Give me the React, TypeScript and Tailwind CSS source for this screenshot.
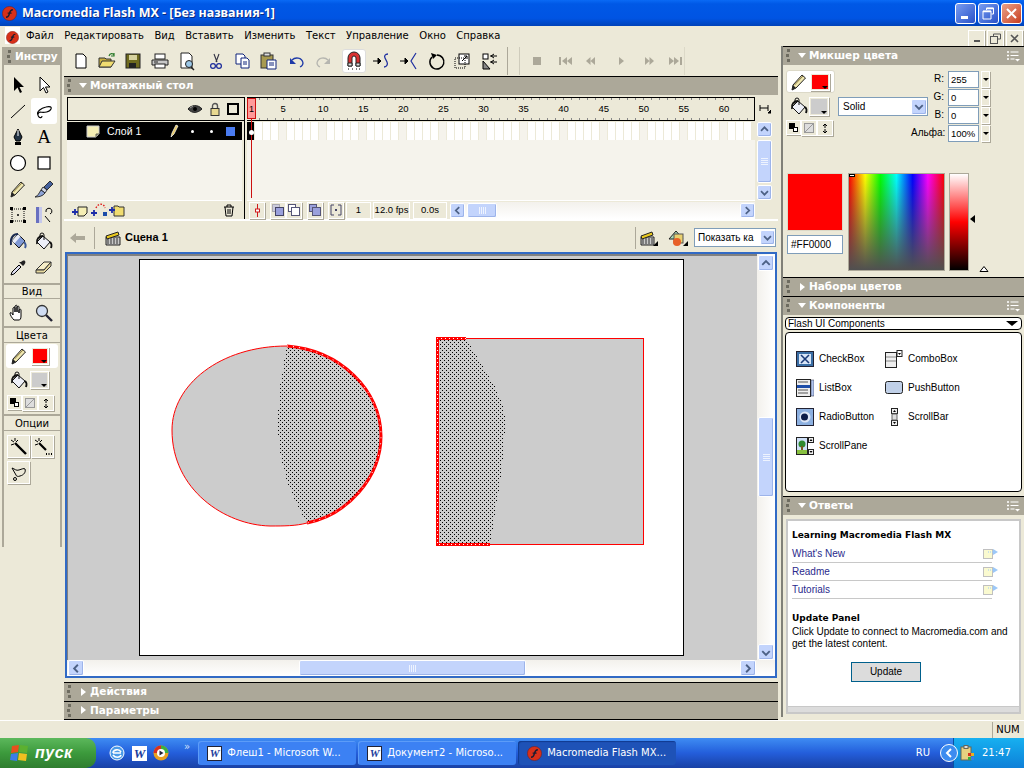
import React from "react";

// ===== SMALL HELPERS =====

function Ico({ w = 20, h = 20, children }: { w?: number; h?: number; children: React.ReactNode }) {
  return (
    <svg width={w} height={h} viewBox={`0 0 ${w} ${h}`} className="block shrink-0">
      {children}
    </svg>
  );
}

function FlashLogo({ size = 18 }: { size?: number }) {
  return (
    <svg width={size} height={size} viewBox="0 0 18 18" className="block shrink-0">
      <circle cx="9" cy="9" r="8.5" fill="#d7301a" stroke="#7a1a10" strokeWidth="0.6" />
      <path d="M13 4.5C9.5 4.5 9.5 7 8.8 9.5 8.2 12 7.5 13.5 4.8 13.5M6.8 8.5H11.5" fill="none" stroke="#1c1c30" strokeWidth="1.7" />
    </svg>
  );
}

function Grip() {
  return (
    <div className="flex flex-col gap-[2px] w-[4px] shrink-0">
      {[0, 1, 2].map((i) => (
        <div key={i} className="w-[3px] h-[3px] bg-[#6e6c60] odd:ml-[1px]" />
      ))}
    </div>
  );
}

function MenuGlyph() {
  return (
    <Ico w={14} h={12}>
      <path d="M1 2h2M1 5.5h2M1 9h2" stroke="#fff" strokeWidth="1.4" />
      <path d="M4.5 2h8M4.5 5.500h8M4.500 9h4" stroke="#fff" strokeWidth="1.2" />
      <path d="M9 9h5l-2.500 2.500z" fill="#fff" />
    </Ico>
  );
}

function PanelHeader({ title, open = false, menu = false, short = false }: { title: string; open?: boolean; menu?: boolean; short?: boolean }) {
  return (
    <div className={`${short ? "h-[18px]" : "h-[19px]"} shrink-0 bg-[#aca899] border-t border-black flex items-center pl-[3px] pr-[4px] pb-[1px] text-white font-bold text-[10.5px]`}>
      <Grip />
      {open ? (
        <div className="ml-[8px] w-0 h-0 border-l-[4px] border-r-[4px] border-t-[5px] border-l-transparent border-r-transparent border-t-white" />
      ) : (
        <div className="ml-[10px] w-0 h-0 border-t-[4px] border-b-[4px] border-l-[5px] border-t-transparent border-b-transparent border-l-white" />
      )}
      <span className={open ? "ml-[3px]" : "ml-[4px]"}>{title}</span>
      {menu && (
        <div className="ml-auto">
          <MenuGlyph />
        </div>
      )}
    </div>
  );
}

function ScrollBtn({ dir, big = false }: { dir: "up" | "down" | "left" | "right"; big?: boolean }) {
  const paths = {
    up: "M3.500 9L7.500 5 11.500 9",
    down: "M3.500 6L7.500 10 11.500 6",
    left: "M9.500 3.500L5.500 7.500 9.500 11.500",
    right: "M5.500 3.500L9.500 7.500 5.500 11.500",
  };
  return (
    <div className={`${big ? "w-[16px] h-[16px]" : "w-[15px] h-[15px]"} shrink-0 rounded-[2px] border border-white bg-[#c3d4fc] flex items-center justify-center shadow-[inset_-1px_-1px_0_#9db4ea]`}>
      <svg width="15" height="15" viewBox="0 0 15 15" className="block">
        <path d={paths[dir]} fill="none" stroke="#4d6185" strokeWidth="2" />
      </svg>
    </div>
  );
}

function Thumb({ vertical = false, className = "" }: { vertical?: boolean; className?: string }) {
  return (
    <div className={`rounded-[2px] border border-white bg-[#c3d4fc] shadow-[inset_-1px_-1px_0_#9db4ea] flex items-center justify-center ${vertical ? "flex-col gap-[1px]" : "gap-[1px]"} ${className}`}>
      {[0, 1, 2, 3].map((i) => (
        <div key={i} className={vertical ? "w-[7px] h-px bg-[#eef3fe]" : "w-px h-[7px] bg-[#eef3fe]"} />
      ))}
    </div>
  );
}

function Swatch({ color, w = 20, h = 20 }: { color: string; w?: number; h?: number }) {
  return (
    <div style={{ width: w, height: h }} className="bg-[#ece9d8] border border-white shadow-[1px_1px_0_#aca899] p-[1px] relative shrink-0">
      <div className="w-full h-full" style={{ background: color }} />
      <div className="absolute right-[1px] bottom-[1px] w-0 h-0 border-l-[3px] border-r-[3px] border-t-[3px] border-l-transparent border-r-transparent border-t-black" />
    </div>
  );
}

// ===== TOOL ICONS =====

const PencilIcon = () => (
  <Ico>
    <path d="M3 18l1-5 9-10 3.500 3-9.500 10z" fill="#f0e8b0" stroke="#222" strokeWidth="1" />
    <path d="M3 18l1-5 3 3z" fill="#222" />
    <path d="M5.500 13l8.500-9" stroke="#8a7a40" />
  </Ico>
);

const InkBottle = () => (
  <Ico>
    <path d="M10 3l7 7-6 7-7-7z" fill="#7f98d4" stroke="#111" />
    <path d="M10 3l2.500 2.500-6 7-2.500-2.500z" fill="#e8ecf8" />
    <path d="M10 3C5 3 2 7 3 14" fill="none" stroke="#1a2a50" strokeWidth="2" />
    <path d="M16 11c2 2 2 4 1 6" fill="none" stroke="#3d5a98" strokeWidth="2" />
  </Ico>
);

const PaintBucket = () => (
  <Ico>
    <path d="M9 5l7 6-6 7-7-7z" fill="#eef0f8" stroke="#111" />
    <path d="M6 8V4a2 2 0 0 1 4 0v5" fill="none" stroke="#111" />
    <path d="M9 5c-4 0-7 3-6 8" fill="none" stroke="#111" strokeWidth="1.8" />
    <path d="M16 11c2 2 2 3 1 6" fill="none" stroke="#111" strokeWidth="2" />
  </Ico>
);

const BrushIcon = () => (
  <Ico>
    <path d="M10 8l6-6 3 3-6 6z" fill="#44609c" stroke="#111" strokeWidth="0.8" />
    <path d="M9 8l4 3-2 3-4-3z" fill="#cfd6e8" stroke="#111" strokeWidth="0.8" />
    <path d="M7 11l4 3c-2 3-6 4-10 4 3-1 4-4 6-7z" fill="#8da3d6" stroke="#111" strokeWidth="0.8" />
  </Ico>
);

function TextTool() {
  return <span className="font-['Liberation_Serif',serif] text-[19px] leading-[20px] text-black">A</span>;
}

const tools: React.ReactNode[] = [
  <Ico key="a"><path d="M6 2v14l3.500-3.500L12 18l2-1-2.500-5H16z" fill="#000" /></Ico>,
  <Ico key="b"><path d="M6 2v14l3.500-3.500L12 18l2-1-2.500-5H16z" fill="#fff" stroke="#000" /></Ico>,
  <Ico key="c"><path d="M3 17L17 4" stroke="#000" strokeWidth="1" /></Ico>,
  <Ico key="d"><path d="M4 14c-2-3 3-7 8-8 4-1 6 0 5 2-1 3-7 4-11 3M6 11c-2 1-3 3-1 5 1 1 3 1 3-1" fill="none" stroke="#000" strokeWidth="1.1" /></Ico>,
  <Ico key="e"><path d="M10 2l4 8-2 4H8l-2-4z" fill="#234" stroke="#000" /><path d="M10 3v6" stroke="#fff" /><rect x="7" y="15" width="6" height="3" fill="#000" /></Ico>,
  <TextTool key="f" />,
  <Ico key="g"><circle cx="10" cy="10" r="7.500" fill="#fff" stroke="#000" strokeWidth="1.2" /></Ico>,
  <Ico key="h"><rect x="4" y="4" width="12" height="12" fill="#fff" stroke="#000" strokeWidth="1.2" /></Ico>,
  <PencilIcon key="i" />,
  <BrushIcon key="j" />,
  <Ico key="k"><rect x="4" y="4" width="12" height="12" fill="none" stroke="#000" strokeDasharray="1 1" /><path d="M2 2h3v3H2zM15 2h3v3h-3zM2 15h3v3H2zM15 15h3v3h-3z" fill="#000" /><circle cx="10" cy="10" r="1" /></Ico>,
  <Ico key="l"><rect x="2" y="2" width="6" height="16" fill="#6870c0" /><rect x="5" y="2" width="3" height="16" fill="#c5c8ec" /><path d="M12 7a3 3 0 1 1 4 2M11 11l5 6" fill="none" stroke="#000" /></Ico>,
  <InkBottle key="m" />,
  <PaintBucket key="n" />,
  <Ico key="o"><path d="M3 18l1-3 7-7 2 2-7 7z" fill="#dde" stroke="#000" /><path d="M11 5l4 4 1-1c1-1 2-3 1-4s-3 0-4 1z" fill="#222" /></Ico>,
  <Ico key="p"><path d="M2 13l8-8h7l-7 8z" fill="#f6eec8" stroke="#333" /><path d="M2 13v3h8l7-7V5l-7 8z" fill="#e6d9a0" stroke="#333" /></Ico>,
];

// ===== TOP TOOLBAR ICONS =====

const toolbarIcons: { x: number; node: React.ReactNode; on?: boolean }[] = [
  { x: 7, node: <Ico><path d="M5 3h7l3 3v11H5z" fill="#fff" stroke="#000" /></Ico> },
  { x: 6, node: <Ico><path d="M2 7h6l1 1h5v8H2z" fill="#c8b040" stroke="#333" /><path d="M5 10h13l-4 6H2z" fill="#f0dc70" stroke="#333" /><path d="M12 5c1-3 4-3 5-1M17 2v3h-3" fill="none" stroke="#2a7a2a" strokeWidth="1.2" /></Ico> },
  { x: 6, node: <Ico><rect x="3" y="3" width="14" height="14" fill="#6e6a1e" stroke="#222" /><rect x="6" y="4" width="8" height="5" fill="#d6d29e" /><rect x="6" y="12" width="7" height="5" fill="#222" /></Ico> },
  { x: 7, node: <Ico><rect x="5" y="3" width="10" height="5" fill="#fff" stroke="#222" /><path d="M2 9h16v5H2z" fill="#c8c8c8" stroke="#222" /><rect x="5" y="13" width="10" height="4" fill="#fff" stroke="#222" /><path d="M4 11h4" stroke="#222" /></Ico> },
  { x: 7, node: <Ico><path d="M4 2h8l3 3v12H4z" fill="#fff" stroke="#222" /><circle cx="12" cy="13" r="3.500" fill="#9cc8e8" stroke="#222" /><path d="M14 16l3 3" stroke="#222" strokeWidth="1.5" /></Ico> },
  { x: 9, node: <Ico><path d="M8 3l3 8M13 3l-3 8" stroke="#334" strokeWidth="1.1" /><circle cx="7" cy="15" r="2.400" fill="none" stroke="#1a2a9a" strokeWidth="1.2" /><circle cx="13" cy="15" r="2.400" fill="none" stroke="#1a2a9a" strokeWidth="1.2" /></Ico> },
  { x: 7, node: <Ico><path d="M3 3h7l2 2v8H3z" fill="#fff" stroke="#11247a" /><path d="M8 7h6l2 2v8H8z" fill="#fff" stroke="#11247a" /><path d="M10 11h4M10 13h4" stroke="#11247a" /></Ico> },
  { x: 5, node: <Ico><rect x="3" y="4" width="12" height="13" fill="#a89a50" stroke="#333" /><rect x="6" y="2" width="6" height="3" fill="#ddd" stroke="#333" /><path d="M9 9h9v9H9z" fill="#fff" stroke="#11247a" /><path d="M11 12h5M11 14h5" stroke="#11247a" /></Ico> },
  { x: 9, node: <Ico><path d="M5 9c3-3 10-3 11 3 0 2-1 3-3 4" fill="none" stroke="#1e3aa8" strokeWidth="1.3" /><path d="M3 7v6h6z" fill="#1e3aa8" /></Ico> },
  { x: 6, node: <Ico><path d="M15 9c-3-3-10-3-11 3 0 2 1 3 3 4" fill="none" stroke="#b6b6b0" strokeWidth="1.3" /><path d="M17 7v6h-6z" fill="#b6b6b0" /></Ico> },
  { x: 11, on: true, node: <Ico><path d="M4 15V7a6 6 0 0 1 12 0v8h-4V7a2 2 0 0 0-4 0v8z" fill="#d83030" stroke="#222" /><path d="M4 12h4v3H4zM12 12h4v3h-4z" fill="#ddd" stroke="#222" /><path d="M4 18h1M8 18h1M12 18h1M15 18h1" stroke="#000" /></Ico> },
  { x: 8, node: <Ico><path d="M1 10h5M6 7l3 3-3 3z" fill="#000" stroke="#000" /><path d="M16 3c-3 0-4 2-3 4l2 4c1 2 0 5-3 5" fill="none" stroke="#1e2fa0" strokeWidth="1.3" /></Ico> },
  { x: 7, node: <Ico><path d="M1 10h5M6 7l3 3-3 3z" fill="#000" stroke="#000" /><path d="M17 2l-5 8 5 8" fill="none" stroke="#1e2fa0" strokeWidth="1.2" /></Ico> },
  { x: 7, node: <Ico><path d="M6 6a7 7 0 1 0 5-2" fill="none" stroke="#000" strokeWidth="1.5" /><path d="M5 2l6 2-4 4z" fill="#000" /></Ico> },
  { x: 6, node: <Ico><rect x="7" y="3" width="10" height="10" fill="#fff" stroke="#000" /><rect x="3" y="7" width="10" height="10" fill="none" stroke="#000" strokeDasharray="1 1" /><path d="M10 10l5-5M12 5h3v3" stroke="#000" fill="none" /></Ico> },
  { x: 8, node: <Ico><rect x="3" y="3" width="5" height="5" fill="#fff" stroke="#000" /><path d="M3 10l7 8H3z" fill="#888" stroke="#000" /><path d="M10 5h7M10 11h7M14 3l-3 2 3 2M14 9l-3 2 3 2" stroke="#000" fill="none" /></Ico> },
];

// ===== LEFT TOOL PANEL =====

function SectionTitle({ children }: { children: React.ReactNode }) {
  return <div className="h-[13px] leading-[12px] text-center text-[10px] text-black border-b border-[#aca899] shrink-0">{children}</div>;
}

function SmallBtn({ children, size = 23 }: { children: React.ReactNode; size?: number }) {
  return (
    <div style={{ width: size, height: size }} className="border border-white shadow-[1px_1px_0_#aca899] flex items-center justify-center shrink-0">
      {children}
    </div>
  );
}

function ColorButtons() {
  return (
    <div className="flex">
      <SmallBtn size={15}>
        <div className="relative w-[9px] h-[9px]">
          <div className="absolute left-0 top-0 w-[6px] h-[6px] bg-black" />
          <div className="absolute right-0 bottom-0 w-[5px] h-[5px] bg-white border border-black" />
        </div>
      </SmallBtn>
      <SmallBtn size={16}>
        <Ico w={10} h={10}><rect x="0.5" y="0.5" width="9" height="9" fill="#ddd" stroke="#999" /><path d="M1 9L9 1" stroke="#999" /></Ico>
      </SmallBtn>
      <SmallBtn size={16}>
        <Ico w={10} h={11}><path d="M5 1v4M5 6v4M3 3l2-2 2 2M3 8l2 2 2-2" fill="none" stroke="#000" /></Ico>
      </SmallBtn>
    </div>
  );
}

function ToolPanel() {
  return (
    <div className="w-[64px] shrink-0 pt-[2px] pl-[2px]">
      <div className="w-[60px] h-[500px] border-x-2 border-[#aca899] flex flex-col">
        <div className="h-[18px] bg-[#aca899] flex items-center pl-[3px] text-white font-bold text-[10.5px] overflow-hidden shrink-0">
          <Grip />
          <span className="ml-[4px] whitespace-nowrap">Инстру</span>
        </div>
        <div className="mt-[4px] h-[216px] shrink-0 border-b-2 border-[#aca899] pl-[1px]">
          <div className="grid grid-cols-[26px_26px] auto-rows-[26px] pt-[3px]">
            {tools.map((t, i) => (
              <div key={i} className={`flex items-center justify-center ${i === 3 ? "bg-white rounded-[3px]" : ""}`}>
                {t}
              </div>
            ))}
          </div>
        </div>
        <div className="pt-[1px] h-[43px] shrink-0 border-b-2 border-[#aca899]">
          <SectionTitle>Вид</SectionTitle>
          <div className="grid grid-cols-[26px_26px] pt-[4px] pl-[1px]">
            <div className="flex justify-center">
              <Ico><path d="M6 17c-2-2-4-5-4-7 1-1 2 0 3 2V5c1-1 2-1 2 0v4-6c1-1 2-1 2 0v6-5c1-1 2-1 2 0v6-3c1-1 2-1 2 0v6c0 3-1 4-2 4z" fill="#fff" stroke="#000" strokeWidth="1" /></Ico>
            </div>
            <div className="flex justify-center">
              <Ico><circle cx="8" cy="8" r="5.500" fill="#cfdcf2" stroke="#333" strokeWidth="1.3" /><path d="M12 12l6 6" stroke="#223" strokeWidth="2.4" /></Ico>
            </div>
          </div>
        </div>
        <div className="pt-[2px] h-[88px] shrink-0 border-b-2 border-[#aca899]">
          <SectionTitle>Цвета</SectionTitle>
          <div className="mt-[1px] mx-[2px] h-[24px] bg-white rounded-[3px] flex items-center">
            <div className="ml-[3px]"><PencilIcon /></div>
            <div className="ml-[2px]"><Swatch color="#ff0000" w={18} h={18} /></div>
          </div>
          <div className="mt-[2px] flex items-center pl-[5px]">
            <PaintBucket />
            <div className="ml-[1px]"><Swatch color="#cccccc" w={19} h={18} /></div>
          </div>
          <div className="mt-[5px] pl-[3px]"><ColorButtons /></div>
        </div>
        <div className="pt-[2px] flex-1">
          <SectionTitle>Опции</SectionTitle>
          <div className="flex gap-[1px] pl-[3px] pt-[4px]">
            <SmallBtn>
              <Ico><path d="M2 3l3 2M6 1v3M2 8l3-1M9 3L7 5" stroke="#000" /><path d="M6 6l11 11" stroke="#000" strokeWidth="2.4" /></Ico>
            </SmallBtn>
            <SmallBtn>
              <Ico><path d="M2 3l3 2M6 1v3M2 8l3-1M9 3L7 5" stroke="#000" /><path d="M6 6l7 7" stroke="#000" strokeWidth="2.2" /><path d="M13 17h1M15.500 17h1M18 17h1" stroke="#000" strokeWidth="2" /></Ico>
            </SmallBtn>
          </div>
          <div className="pl-[3px] pt-[3px]">
            <SmallBtn>
              <Ico><path d="M3 5c3 1 4 3 7 2s5-2 6-1c1 3-1 6-5 7-2 1-4 0-4-1M7 12L3 5" fill="none" stroke="#000" /><circle cx="6" cy="16" r="1.500" fill="none" stroke="#000" /></Ico>
            </SmallBtn>
          </div>
        </div>
      </div>
    </div>
  );
}

// ===== TIMELINE =====

const frameNumbers = Array.from({ length: 63 }, (_, i) => i + 1);

function OnionBtn({ kind }: { kind: number }) {
  return (
    <div className="w-[16px] h-[17px] border border-white shadow-[1px_1px_0_#aca899] flex items-center justify-center shrink-0">
      {kind === 0 && <Ico w={9} h={13}><path d="M4.500 0v13" stroke="#d01818" /><rect x="2.500" y="5" width="4" height="3" fill="#fff" stroke="#d01818" /></Ico>}
      {kind === 1 && <Ico w={12} h={12}><rect x="0.5" y="0.5" width="7" height="7" fill="#ccd" stroke="#778" strokeDasharray="1 1" /><rect x="3.500" y="3.500" width="8" height="8" fill="#9aa0dc" stroke="#446" /></Ico>}
      {kind === 2 && <Ico w={12} h={12}><rect x="0.5" y="0.5" width="7" height="7" fill="#fff" stroke="#557" /><rect x="3.500" y="3.500" width="8" height="8" fill="#fff" stroke="#557" /></Ico>}
      {kind === 3 && <Ico w={12} h={12}><rect x="0.5" y="0.5" width="7" height="7" fill="#9aa0dc" stroke="#557" /><rect x="3.500" y="3.500" width="8" height="8" fill="#9aa0dc" stroke="#557" /></Ico>}
      {kind === 4 && <Ico w={12} h={12}><path d="M4 1H1v10h3M8 1h3v10H8" fill="none" stroke="#446" /><rect x="5" y="5" width="2" height="2" fill="#446" /></Ico>}
    </div>
  );
}

function InfoBox({ className, children }: { className: string; children: React.ReactNode }) {
  return <div className={`h-[17px] border border-white flex items-center justify-center font-['Liberation_Sans',sans-serif] text-[9.5px] text-black shrink-0 ${className}`}>{children}</div>;
}

function Timeline() {
  return (
    <div className="h-[124px] shrink-0 pl-[3px] pt-[2px] flex">
      <div className="w-[177px] shrink-0 flex flex-col">
        <div className="h-[24px] border border-black border-r-0 flex items-center justify-end pr-[8px] gap-[7px] shrink-0">
          <Ico w={16} h={10}><path d="M1 5c3-4 10-5 14 0-4 4-10 5-14 0z" fill="#444" stroke="#222" /><circle cx="8" cy="5" r="2" fill="#000" /><path d="M3 4l3-2" stroke="#999" /></Ico>
          <Ico w={10} h={14}><path d="M2.500 7V4a2.500 2.500 0 0 1 5 0v3" fill="none" stroke="#555" strokeWidth="1.4" /><rect x="1" y="6.500" width="8" height="7" fill="#e8d890" stroke="#333" /></Ico>
          <div className="w-[12px] h-[12px] border-2 border-black mr-[-3px]" />
        </div>
        <div className="h-[18px] mt-[1px] mr-[2px] bg-black flex items-center text-white font-['Liberation_Sans',sans-serif] text-[10.5px] shrink-0">
          <div className="ml-[19px]">
            <Ico w={14} h={13}><path d="M1 1h12v8l-3 3H1z" fill="#f5eeb4" stroke="#ccc" /><path d="M13 9h-3v3" fill="#998" stroke="#665" /></Ico>
          </div>
          <span className="ml-[7px] w-[36px] whitespace-nowrap">Слой 1</span>
          <div className="ml-[26px]"><Ico w={10} h={14}><path d="M2 13l1-4 4-8 2 1-4 8z" fill="#e8c860" stroke="#fff" strokeWidth="0.7" /></Ico></div>
          <div className="ml-[12px] w-[3px] h-[3px] rounded-full bg-white" />
          <div className="ml-[16px] w-[3px] h-[3px] rounded-full bg-white" />
          <div className="ml-[13px] w-[9px] h-[9px] bg-[#4a7bf0]" />
        </div>
        <div className="flex-1 bg-[#f5f3ec] mr-[2px]" />
        <div className="h-[19px] border-t border-white flex items-center pl-[5px] shrink-0 bg-[#ece9d8] mr-[2px]">
          <Ico w={16} h={13}><path d="M6 3h9v6l-3 3H6z" fill="#f5eeb4" stroke="#222" /><path d="M3 5v6M0 8h6" stroke="#1c2ca8" strokeWidth="1.8" /></Ico>
          <div className="ml-[3px]"><Ico w={17} h={14}><path d="M5 5c2-5 8-5 9 0" fill="none" stroke="#e01818" strokeWidth="1.4" strokeDasharray="1.500 1.500" /><path d="M3 7v6M0 10h6" stroke="#1c2ca8" strokeWidth="1.8" /><rect x="12" y="9" width="4" height="4" fill="#1c4ca8" /></Ico></div>
          <div className="ml-[1px]"><Ico w={16} h={14}><path d="M5 3h4l1 1h5v9H5z" fill="#f0dc70" stroke="#333" /><path d="M3 4v6M0 7h6" stroke="#1c2ca8" strokeWidth="1.8" /></Ico></div>
          <div className="ml-auto mr-[7px]"><Ico w={12} h={13}><path d="M1 3h10M4 3V1h4v2M2 3l1 9h6l1-9M5 5v5M7 5v5" fill="none" stroke="#000" /></Ico></div>
        </div>
      </div>
      <div className="w-[3px] shrink-0 border-l border-black" />
      <div className="flex-1 min-w-0 flex flex-col relative">
        <div className="h-[24px] border-y border-black flex shrink-0 bg-[#ece9d8] border-r">
          {frameNumbers.map((n) => (
            <div key={n} className="w-[8.03px] shrink-0 flex flex-col items-center justify-between relative">
              <div className="w-px h-[2px] bg-[#888]" />
              <span className="font-['Liberation_Sans',sans-serif] text-[9.5px] leading-[12px] h-[12px] text-black flex justify-center w-[8px] whitespace-nowrap">
                {n === 1 || n % 5 === 0 ? n : ""}
              </span>
              <div className="w-px h-[2px] bg-[#888]" />
            </div>
          ))}
        </div>
        <div className="h-[19px] flex shrink-0 pt-[1px]">
          {frameNumbers.map((n) => (
            <div key={n} className={`w-[8.03px] shrink-0 border-r border-[#ece9d8] ${n === 1 ? "bg-black" : n % 5 === 0 ? "bg-[#f5f3ec]" : "bg-white"}`} />
          ))}
        </div>
        <div className="flex-1 bg-[#f5f3ec]" />
        <div className="h-[19px] border-t border-white flex items-center bg-[#ece9d8] shrink-0">
          <div className="ml-[2px]"><OnionBtn kind={0} /></div>
          <div className="ml-[5px]"><OnionBtn kind={1} /></div>
          <OnionBtn kind={2} />
          <div className="ml-[5px]"><OnionBtn kind={3} /></div>
          <div className="ml-[5px]"><OnionBtn kind={4} /></div>
          <InfoBox className="w-[25px] ml-[2px]">1</InfoBox>
          <InfoBox className="w-[37px] ml-[2px] whitespace-nowrap">12.0 fps</InfoBox>
          <InfoBox className="w-[34px] ml-[3px]">0.0s</InfoBox>
          <div className="ml-[3px] w-[305px] h-[17px] bg-gradient-to-b from-[#f3f1ec] to-white flex items-center shrink-0">
            <ScrollBtn dir="left" />
            <Thumb className="ml-[2px] w-[30px] h-[15px]" />
            <div className="flex-1" />
            <ScrollBtn dir="right" />
          </div>
        </div>
        {/* playhead */}
        <div className="absolute left-0 top-[1px] w-[9px] h-[21px] bg-[#ff9a9a] border border-[#cc1010] font-['Liberation_Sans',sans-serif] text-[9px] leading-[20px] text-center text-black">1</div>
        <div className="absolute left-[4px] top-[22px] w-px h-[79px] bg-[#cc1010]" />
        <div className="absolute left-[2px] top-[33px] w-[5px] h-[5px] rounded-full bg-white" />
      </div>
      <div className="w-[23px] shrink-0 flex flex-col items-start pl-[2px]">
        <div className="h-[24px] w-[15px] flex items-center justify-center shrink-0">
          <Ico w={12} h={10}><path d="M1 1v6M1 4h8M9 1v6M12 6l-3 3h3z" stroke="#000" strokeWidth="1" fill="#000" /></Ico>
        </div>
        <div className="h-[78px] mt-[1px] flex flex-col items-center justify-between shrink-0">
          <ScrollBtn dir="up" />
          <Thumb vertical className="w-[15px] h-[43px]" />
          <ScrollBtn dir="down" />
        </div>
      </div>
    </div>
  );
}

// ===== STAGE DRAWING =====

function StageShapes() {
  // coordinates are screen - (140, 260)
  const ox = 140;
  const oy = 260;
  const ovalR = "M287 346C340 350 381 390 381 436C381 478 347 515 307 523";
  const ovalL = "M307 523C296 526 284 526 270 526C225 525 172 490 172 430C172 385 220 346 287 346";
  const ovalSel = `${ovalR}C295 503 278 470 278 425C278 395 282 370 287 346Z`;
  const rectSel = "M437 338H466C478 360 505 395 505 420C505 460 497 500 490 544H437Z";
  return (
    <svg width="543" height="395" viewBox={`${ox} ${oy} 543 395`} className="block">
      <defs>
        <pattern id="dots" width="4" height="4" patternUnits="userSpaceOnUse">
          <rect x="0" y="0" width="1" height="1" fill="#000" />
          <rect x="2" y="2" width="1" height="1" fill="#000" />
        </pattern>
      </defs>
      <path d={`${ovalR}${ovalL.slice(8)}Z`} fill="#cccccc" />
      <path d={ovalSel} fill="url(#dots)" shapeRendering="crispEdges" />
      <path d={ovalL} fill="none" stroke="#ff0000" strokeWidth="1" />
      <path d={ovalR} fill="none" stroke="#ff0000" strokeWidth="3" />
      <path d={ovalR} fill="none" stroke="#fff" strokeWidth="1" strokeDasharray="1 5" />
      <rect x="437.5" y="338.5" width="206" height="206" fill="#cccccc" stroke="#ff0000" />
      <path d={rectSel} fill="url(#dots)" shapeRendering="crispEdges" />
      <path d="M466 338.500H437.500V544.500H490" fill="none" stroke="#ff0000" strokeWidth="3" />
      <path d="M466 338.500H437.500V544.500H490" fill="none" stroke="#fff" strokeWidth="1" strokeDasharray="1 3" />
    </svg>
  );
}

function Stage() {
  return (
    <div className="h-[426px] shrink-0 ml-[1px] mr-[1px] border-2 border-[#316ac5] flex flex-col bg-[#f5f3ec]">
      <div className="flex-1 min-h-0 flex">
        <div className="flex-1 min-w-0 bg-[#cccccc] border-t-2 border-l border-[#808080] pl-[71px] pt-[3px]">
          <div className="w-[545px] h-[397px] bg-white border border-black">
            <StageShapes />
          </div>
        </div>
        <div className="w-[18px] shrink-0 flex flex-col items-center bg-gradient-to-r from-[#f3f1ec] to-white">
          <div className="mt-[1px]"><ScrollBtn dir="up" big /></div>
          <div className="h-[146px]" />
          <Thumb vertical className="w-[16px] h-[80px]" />
          <div className="flex-1" />
          <ScrollBtn dir="down" big />
        </div>
      </div>
      <div className="h-[16px] shrink-0 flex items-center bg-gradient-to-b from-[#f3f1ec] to-white pl-[1px]">
        <ScrollBtn dir="left" big />
        <div className="w-[215px]" />
        <Thumb className="w-[227px] h-[16px]" />
        <div className="flex-1" />
        <div className="mr-[19px]"><ScrollBtn dir="right" big /></div>
      </div>
    </div>
  );
}

// ===== CENTER COLUMN =====

function PlayControls() {
  const glyphs = [
    { d: "M0 0h8v8H0z", w: 8, ml: 13 },
    { d: "M0 0h2v8H0zM8 0v8L3 4zM13 0v8L8 4z", w: 13, ml: 18 },
    { d: "M4.500 0v8L0 4zM9 0v8L4.500 4z", w: 9, ml: 14 },
    { d: "M0 0l5 4-5 4z", w: 5, ml: 24 },
    { d: "M0 0l4.500 4-4.500 4zM4.500 0L9 4 4.500 8z", w: 9, ml: 21 },
    { d: "M0 0l5 4-5 4zM5 0l5 4-5 4zM11 0h2v8h-2z", w: 13, ml: 15 },
  ];
  return (
    <div className="flex items-center">
      {glyphs.map((g, i) => (
        <svg key={i} width={g.w} height="8" viewBox={`0 0 ${g.w} 8`} style={{ marginLeft: g.ml }} className="block">
          <path d={g.d} fill="#aca899" />
        </svg>
      ))}
    </div>
  );
}

function CenterColumn() {
  return (
    <div className="w-[714px] shrink-0 flex flex-col">
      <div className="h-[31px] shrink-0 flex items-center">
        <div className="flex items-center h-full w-[443px] shrink-0">
          {toolbarIcons.map((t, i) => (
            <div key={i} style={{ marginLeft: t.x - (t.on ? 2 : 0), marginRight: t.on ? -2 : 0 }} className={t.on ? "bg-white rounded-[3px] p-[1px] border border-[#ddd]" : ""}>
              {t.node}
            </div>
          ))}
        </div>
        <div className="h-[28px] w-px bg-[#aca899] shrink-0" />
        <div className="ml-[11px] h-[28px] w-px bg-[#cfccbc] shrink-0" />
        <PlayControls />
        <div className="ml-[2px] h-[28px] w-px bg-[#dcd9c8] shrink-0" />
      </div>
      <PanelHeader title="Монтажный стол" open />
      <Timeline />
      <div className="h-[2px] bg-white shrink-0" />
      <div className="h-[31px] shrink-0 flex items-center pt-[2px]">
        <svg width="16" height="12" viewBox="0 0 16 12" className="ml-[6px] block">
          <path d="M0 6l6-5v3h9v4H6v3z" fill="#aca899" />
        </svg>
        <div className="ml-[8px] h-[22px] w-px bg-[#aca899]" />
        <div className="ml-[10px]">
          <Ico w={16} h={16}><path d="M1 7h14v8H1z" fill="#c8c8c8" stroke="#222" /><path d="M2 9h11M2 11h11M2 13h11" stroke="#333" strokeDasharray="2 1" /><path d="M1 6l12-4 1 3-12 4z" fill="#e8c820" stroke="#222" /></Ico>
        </div>
        <span className="ml-[4px] font-['Liberation_Sans',sans-serif] font-bold text-[11px] text-black">Сцена 1</span>
        <div className="ml-auto h-[22px] w-px bg-[#aca899]" />
        <div className="ml-[4px] relative">
          <Ico w={18} h={16}><path d="M1 7h13v8H1z" fill="#c8c8c8" stroke="#222" /><path d="M2 9h11M2 11h11M2 13h11" stroke="#333" strokeDasharray="2 1" /><path d="M1 6l11-4 1 3-11 4z" fill="#e8c820" stroke="#222" /><path d="M18 16h-5l5-5z" fill="#000" /></Ico>
        </div>
        <div className="ml-[10px]">
          <Ico w={20} h={18}><path d="M1 10l7-8 7 8z" fill="#a8d8b8" stroke="#222" /><rect x="6" y="5" width="9" height="9" fill="#e8d070" stroke="#555" /><circle cx="9" cy="13" r="4" fill="#e86028" /><path d="M20 17h-5l5-5z" fill="#000" /></Ico>
        </div>
        <div className="ml-[6px] mr-[2px] w-[82px] h-[19px] border border-[#7f9db9] bg-white flex items-center font-['Liberation_Sans',sans-serif] text-[10px] text-black">
          <span className="pl-[3px] flex-1 whitespace-nowrap">Показать ка</span>
          <ScrollBtn dir="down" />
        </div>
      </div>
      <Stage />
      <div className="h-[4px] shrink-0" />
      <PanelHeader title="Действия" />
      <PanelHeader title="Параметры" short />
      <div className="h-px bg-black shrink-0" />
    </div>
  );
}

// ===== RIGHT COLUMN =====

function RgbRow({ label, value }: { label: string; value: string }) {
  return (
    <div className="flex items-center h-[18px]">
      <span className="w-[33px] text-right font-['Liberation_Sans',sans-serif] text-[10px] whitespace-nowrap text-black">{label}</span>
      <div className="ml-[4px] w-[31px] h-[17px] border border-[#7f9db9] bg-white font-['Liberation_Sans',sans-serif] text-[9.5px] leading-[15px] pl-[2px] text-black">{value}</div>
      <div className="ml-[2px] w-[9px] h-[17px] border border-white shadow-[1px_1px_0_#aca899] flex items-center justify-center">
        <div className="w-0 h-0 border-l-[3px] border-r-[3px] border-t-[3px] border-l-transparent border-r-transparent border-t-black" />
      </div>
    </div>
  );
}

function ColorMixer() {
  return (
    <div className="h-[212px] shrink-0 pt-[5px] pl-[3px] flex flex-col">
      <div className="flex h-[72px] shrink-0">
        <div className="w-[49px] shrink-0 flex flex-col">
          <div className="h-[23px] bg-white rounded-[3px] border border-[#dcd9c8] flex items-center">
            <div className="ml-[2px]"><PencilIcon /></div>
            <div className="ml-[1px]"><Swatch color="#ff0000" w={20} h={18} /></div>
          </div>
          <div className="mt-[3px] flex items-center pl-[3px]">
            <PaintBucket />
            <Swatch color="#cccccc" w={20} h={19} />
          </div>
          <div className="mt-[4px]"><ColorButtons /></div>
        </div>
        <div className="ml-[3px] mt-[27px] w-[90px] h-[19px] border border-[#7f9db9] bg-white flex items-center font-['Liberation_Sans',sans-serif] text-[10px] text-black shrink-0">
          <span className="pl-[4px] flex-1">Solid</span>
          <ScrollBtn dir="down" big />
        </div>
        <div className="ml-[-17px] flex flex-col">
          <RgbRow label="R:" value="255" />
          <RgbRow label="G:" value="0" />
          <RgbRow label="B:" value="0" />
          <RgbRow label="Альфа:" value="100%" />
        </div>
      </div>
      <div className="mt-[31px] flex">
        <div className="w-[56px] ml-[1px] shrink-0">
          <div className="h-[58px] bg-[#ff0000] border border-[#dcd9c8]" />
          <div className="mt-[4px] h-[19px] border border-[#7f9db9] bg-white font-['Liberation_Sans',sans-serif] text-[10px] leading-[17px] pl-[3px] text-black">#FF0000</div>
        </div>
        <div className="ml-[5px] w-[97px] h-[98px] border border-[#aca899] shrink-0 bg-[linear-gradient(to_bottom,rgba(80,80,80,0)_0%,rgba(80,80,80,1)_100%),linear-gradient(to_right,#ff0000,#ffff00_17%,#00ff00_33%,#00ffff_50%,#0000ff_67%,#ff00ff_83%,#ff0000)] relative">
          <div className="absolute left-0 top-0 w-[6px] h-[3px] bg-white border border-black" />
        </div>
        <div className="ml-[4px] w-[20px] h-[98px] border border-[#aca899] shrink-0 bg-[linear-gradient(to_bottom,#ffffff,#ff0000_50%,#000000)]" />
        <div className="flex flex-col ml-[1px] h-[98px] relative w-[20px]">
          <div className="mt-[42px] w-0 h-0 border-y-[4px] border-r-[5px] border-y-transparent border-r-black" />
          <div className="mt-auto ml-[9px] mb-[-1px]">
            <Ico w={10} h={6}><path d="M1 5.500l4-5 4 5z" fill="#fff" stroke="#000" /></Ico>
          </div>
        </div>
      </div>
    </div>
  );
}

const componentIcons: Record<string, React.ReactNode> = {
  CheckBox: <Ico w={18} h={16}><rect x="0.5" y="0.5" width="17" height="15" fill="#3a6ea5" stroke="#223" /><rect x="3" y="3" width="12" height="10" fill="#d8e4f6" /><path d="M5 4l8 8M13 4l-8 8" stroke="#1a3a78" strokeWidth="1.6" /></Ico>,
  ComboBox: <Ico w={18} h={18}><rect x="0.5" y="2.500" width="11" height="15" fill="#eee" stroke="#222" /><path d="M1 7h10M1 11h10" stroke="#888" /><rect x="12" y="0.5" width="5" height="6" fill="#fff" stroke="#222" /><path d="M13 3h3l-1.500 2z" fill="#000" /></Ico>,
  ListBox: <Ico w={18} h={18}><rect x="0.5" y="0.5" width="14" height="17" fill="#eee" stroke="#222" /><rect x="1" y="6" width="13" height="3" fill="#1c4ca8" /><path d="M2 3h10M2 11h10M2 14h10" stroke="#555" /><rect x="15" y="1" width="3" height="16" fill="#b0c4ee" stroke="#334" strokeWidth="0.5" /></Ico>,
  PushButton: <Ico w={18} h={13}><rect x="0.5" y="0.5" width="17" height="12" rx="2" fill="#c0d0e8" stroke="#222" /></Ico>,
  RadioButton: <Ico w={18} h={18}><rect x="0.5" y="0.5" width="17" height="17" fill="#8cb0e0" stroke="#223" /><circle cx="9" cy="9" r="5.500" fill="#dde6f6" /><circle cx="8.500" cy="9" r="3.500" fill="#0c1c48" /></Ico>,
  ScrollBar: <Ico w={18} h={18}><rect x="6.500" y="0.5" width="6" height="5" fill="#eee" stroke="#222" /><path d="M8 4h3L9.500 2z" fill="#000" /><rect x="6.500" y="12.500" width="6" height="5" fill="#eee" stroke="#222" /><path d="M8 14h3l-1.500 2z" fill="#000" /><rect x="7" y="6" width="5" height="6" fill="#ddd" stroke="#666" /></Ico>,
  ScrollPane: <Ico w={18} h={18}><rect x="0.5" y="0.5" width="11" height="17" fill="#cfe0f8" stroke="#222" /><circle cx="6" cy="7" r="3.500" fill="#2f8a2f" /><rect x="5" y="9" width="2" height="4" fill="#7a5a20" /><rect x="1" y="13" width="10" height="4" fill="#88c040" /><rect x="12.500" y="0.5" width="5" height="5" fill="#eee" stroke="#222" /><path d="M13.500 4h3L15 2z" fill="#000" /><rect x="12.500" y="12.500" width="5" height="5" fill="#eee" stroke="#222" /><path d="M13.500 14h3L15 16z" fill="#000" /></Ico>,
};

function ComponentItem({ name }: { name: string }) {
  return (
    <div className="flex items-center h-[29px]">
      <div className="w-[23px] flex shrink-0">{componentIcons[name]}</div>
      <span className="font-['Liberation_Sans',sans-serif] text-[10px] text-black whitespace-nowrap">{name}</span>
    </div>
  );
}

function HelpLink({ label }: { label: string }) {
  return (
    <div className="h-[18px] w-[200px] border-b border-[#c8c8c8] flex items-center font-['Liberation_Sans',sans-serif] text-[10px] text-[#2a2a8c]">
      <span>{label}</span>
      <div className="ml-auto mr-[-6px]">
        <Ico w={15} h={11}><rect x="0.5" y="1.500" width="9" height="9" fill="#fafad0" stroke="#c0c0c0" /><path d="M5 4h6" stroke="#9cc8f8" strokeDasharray="1 1" /><path d="M10 1l5 3-5 3z" fill="#9cc8f8" /></Ico>
      </div>
    </div>
  );
}

function RightColumn() {
  return (
    <div className="w-[246px] shrink-0 pl-[3px]">
      <div className="h-[671px] mt-[1px] border-l-2 border-[#808078] flex flex-col">
        <PanelHeader title="Микшер цвета" open menu />
        <ColorMixer />
        <PanelHeader title="Наборы цветов" />
        <PanelHeader title="Компоненты" open menu />
        <div className="mt-[2px] mx-[2px] h-[13px] rounded-[4px] border border-black bg-white flex items-center font-['Liberation_Sans',sans-serif] text-[10px] text-black pl-[2px] shrink-0">
          <span className="flex-1">Flash UI Components</span>
          <div className="mr-[3px] w-0 h-0 border-l-[6px] border-r-[6px] border-t-[5px] border-l-transparent border-r-transparent border-t-black" />
        </div>
        <div className="mt-[2px] mx-[2px] h-[160px] rounded-[4px] border border-black bg-white shrink-0 pl-[10px] pt-[11px]">
          <div className="grid grid-cols-[89px_100px]">
            <ComponentItem name="CheckBox" />
            <ComponentItem name="ComboBox" />
            <ComponentItem name="ListBox" />
            <ComponentItem name="PushButton" />
            <ComponentItem name="RadioButton" />
            <ComponentItem name="ScrollBar" />
            <ComponentItem name="ScrollPane" />
          </div>
        </div>
        <div className="h-[4px] shrink-0" />
        <PanelHeader title="Ответы" open menu />
        <div className="mt-[4px] ml-[3px] mr-[3px] h-[195px] border-2 border-[#c8c8c8] bg-white flex flex-col shrink-0">
          <div className="flex-1 pl-[4px] pt-[7px] text-black">
            <div className="font-bold text-[9px] h-[14px] leading-[14px]">Learning Macromedia Flash MX</div>
            <div className="mt-[3px]">
              <HelpLink label="What's New" />
              <HelpLink label="Readme" />
              <HelpLink label="Tutorials" />
            </div>
            <div className="mt-[13px] font-bold text-[9px] leading-[12px]">Update Panel</div>
            <div className="mt-[2px] font-['Liberation_Sans',sans-serif] text-[10px] leading-[12px] w-[222px]">Click Update to connect to Macromedia.com and get the latest content.</div>
            <div className="mt-[12px] ml-[59px] w-[70px] h-[20px] bg-[#dcdcdc] border border-[#00608c] flex items-center justify-center font-['Liberation_Sans',sans-serif] text-[10px]">Update</div>
          </div>
          <div className="h-[6px] bg-[#dcdcdc] border-t border-[#c8c8c8] shrink-0" />
        </div>
      </div>
    </div>
  );
}

// ===== WINDOW CHROME =====

function WinBtn({ kind }: { kind: "min" | "max" | "close" }) {
  return (
    <div className={`w-[21px] h-[21px] rounded-[3px] border border-white flex items-center justify-center ${kind === "close" ? "bg-gradient-to-br from-[#e8a088] to-[#c83a18]" : "bg-gradient-to-br from-[#7a9cf0] to-[#2a50c8]"}`}>
      {kind === "min" && <div className="w-[7px] h-[3px] bg-white mt-[8px] mr-[3px]" />}
      {kind === "max" && (
        <svg width="13" height="13" viewBox="0 0 13 13" className="block">
          <path d="M4.500 3V1h7v6h-2" fill="none" stroke="#fff" />
          <path d="M1 4h8v8H1z" fill="none" stroke="#fff" />
          <path d="M1 4.500h8M4.500 1.500h7" stroke="#fff" strokeWidth="1.4" />
        </svg>
      )}
      {kind === "close" && (
        <svg width="13" height="13" viewBox="0 0 13 13" className="block">
          <path d="M2 2l9 9M11 2l-9 9" stroke="#fff" strokeWidth="2" />
        </svg>
      )}
    </div>
  );
}

function MenuBar() {
  const items = ["Файл", "Редактировать", "Вид", "Вставить", "Изменить", "Текст", "Управление", "Окно", "Справка"];
  return (
    <div className="h-[19px] shrink-0 flex items-center bg-[#ece9d8] text-[10px] text-black">
      <div className="ml-[5px] mr-[6px] w-[15px] h-[17px] bg-white flex items-end justify-center">
        <FlashLogo size={13} />
      </div>
      <div className="flex gap-[10.5px]">
        {items.map((m) => (
          <span key={m}>{m}</span>
        ))}
      </div>
      <div className="ml-auto flex items-center gap-[2px] pr-[1px] mt-[5px]">
        {["min", "max", "close"].map((k) => (
          <div key={k} className="w-[17px] h-[17px] border border-white shadow-[1px_1px_0_#aca899] flex items-center justify-center">
            {k === "min" && <div className="w-[6px] h-[2px] bg-[#555] mt-[6px]" />}
            {k === "max" && <svg width="11" height="11" viewBox="0 0 11 11" className="block"><path d="M3.500 3V1h7v5H8" fill="none" stroke="#555" /><rect x="0.5" y="3.500" width="7" height="7" fill="none" stroke="#555" /></svg>}
            {k === "close" && <svg width="9" height="9" viewBox="0 0 9 9" className="block"><path d="M1 1l7 7M8 1L1 8" stroke="#555" strokeWidth="1.6" /></svg>}
          </div>
        ))}
      </div>
    </div>
  );
}

function TaskButton({ icon, label, active = false }: { icon: React.ReactNode; label: string; active?: boolean }) {
  return (
    <div className={`w-[158px] h-[24px] rounded-[3px] flex items-center pl-[9px] text-[10px] text-white shrink-0 ${active ? "bg-[#1e52b7] shadow-[inset_1px_1px_1px_#103a90]" : "bg-[#3c81f3] shadow-[inset_1px_1px_0_#5c9cf8]"}`}>
      {icon}
      <span className="ml-[5px] whitespace-nowrap">{label}</span>
    </div>
  );
}

function WordIcon() {
  return (
    <div className="w-[15px] h-[15px] bg-white border border-[#223] flex items-center justify-center font-['Liberation_Serif',serif] font-bold italic text-[11px] text-[#1c3c9c] shrink-0">W</div>
  );
}

function Taskbar() {
  return (
    <div className="h-[30px] shrink-0 bg-gradient-to-b from-[#3f8cf3] via-[#245edb] to-[#1941a5] flex items-center text-white">
      <div className="w-[96px] h-full rounded-r-[10px] bg-gradient-to-b from-[#5cb85c] via-[#3c9a3c] to-[#2f7d2f] flex items-center pl-[10px] shrink-0">
        <svg width="20" height="19" viewBox="0 0 20 19" className="block">
          <path d="M2 2l7-1-1 7-7 1z" fill="#e8501c" />
          <path d="M10 1l8 1-1 7-8-1z" fill="#5cb030" />
          <path d="M1 10l7-1-1 8-7-1z" fill="#3c7ce8" />
          <path d="M9 9l8 1-1 7-8-1z" fill="#f0c020" />
        </svg>
        <span className="ml-[5px] font-['Liberation_Sans',sans-serif] font-bold italic text-[16px] tracking-[0.5px] text-white">пуск</span>
      </div>
      <div className="ml-[12px] flex items-center gap-[6px]">
        <svg width="18" height="18" viewBox="0 0 18 18" className="block"><circle cx="9" cy="9" r="7" fill="#4a9ae8" stroke="#fff" /><path d="M5 9h8M5 9c0-3 6-5 8-1M13 11c-1 3-6 3-8 0" fill="none" stroke="#fff" strokeWidth="1.6" /></svg>
        <div className="w-[15px] h-[15px] bg-white flex items-center justify-center font-['Liberation_Serif',serif] font-bold italic text-[13px] text-[#1c3c9c]">W</div>
        <svg width="16" height="16" viewBox="0 0 16 16" className="block"><circle cx="8" cy="8" r="7.500" fill="#e8a020" /><path d="M8 .5A7.500 7.500 0 0 1 15.500 8H8z" fill="#3cb040" /><path d="M.5 8A7.500 7.500 0 0 1 8 .5V8z" fill="#d83020" /><circle cx="8" cy="8" r="4" fill="#fff" /><path d="M6.500 5.500l4 2.500-4 2.500z" fill="#223" /></svg>
      </div>
      <span className="ml-[15px] mb-[12px] text-[10px] text-[#cfe0fb] leading-none">»</span>
      <div className="ml-[8px] flex items-center gap-[2px]">
        <TaskButton icon={<WordIcon />} label="Флеш1 - Microsoft W..." />
        <TaskButton icon={<WordIcon />} label="Документ2 - Microso..." />
        <TaskButton active icon={<FlashLogo size={15} />} label="Macromedia Flash MX..." />
      </div>
      <span className="ml-auto text-[10px]">RU</span>
      <div className="ml-[10px] w-[18px] h-[18px] rounded-full bg-[#3c8cf0] border border-white flex items-center justify-center z-10 mr-[-5px]">
        <svg width="8" height="10" viewBox="0 0 8 10" className="block"><path d="M6 1L2 5l4 4" fill="none" stroke="#fff" strokeWidth="2" /></svg>
      </div>
      <div className="w-[71px] h-full bg-gradient-to-b from-[#18b0f0] to-[#0f80d8] border-l border-[#0a50a0] flex items-center pl-[6px] shrink-0">
        <svg width="15" height="17" viewBox="0 0 15 17" className="block"><rect x="1" y="2" width="10" height="13" fill="#e8d080" stroke="#665" /><rect x="4" y="0.5" width="4" height="3" fill="#ddd" stroke="#665" /><rect x="8" y="8" width="3" height="3" fill="#d83020" /><rect x="11" y="8" width="3" height="3" fill="#e8b020" /><rect x="8" y="12" width="3" height="3" fill="#3cb040" /><rect x="11" y="12" width="3" height="3" fill="#3c7ce8" /></svg>
        <span className="ml-[7px] text-[10px]">21:47</span>
      </div>
    </div>
  );
}

export default function App() {
  return (
    <div className="w-[1024px] h-[768px] flex flex-col overflow-hidden bg-[#ece9d8] font-['DejaVu_Sans',sans-serif] text-[10px] leading-none">
      <div className="h-[26px] shrink-0 bg-[linear-gradient(to_bottom,#0a6af5_0%,#0058e6_15%,#0054e3_70%,#0042b8_100%)] flex items-center pl-[2px] pr-[2px] text-white">
        <FlashLogo size={15} />
        <span className="ml-[5px] font-['Noto_Sans',sans-serif] font-bold text-[12.5px] whitespace-nowrap [text-shadow:1px_1px_0_#0a2a80]">
          Macromedia Flash MX - [Без названия-1]
        </span>
        <div className="ml-auto flex gap-[2px]">
          <WinBtn kind="min" />
          <WinBtn kind="max" />
          <WinBtn kind="close" />
        </div>
      </div>
      <MenuBar />
      <div className="flex-1 min-h-0 flex">
        <ToolPanel />
        <CenterColumn />
        <RightColumn />
      </div>
      <div className="h-[18px] shrink-0 flex items-center justify-end border-t border-white bg-[#ece9d8] pr-[1px]">
        <div className="w-[31px] h-[16px] border-l border-[#aca899] text-[10px] leading-[16px] text-black text-center">NUM</div>
      </div>
      <Taskbar />
    </div>
  );
}
